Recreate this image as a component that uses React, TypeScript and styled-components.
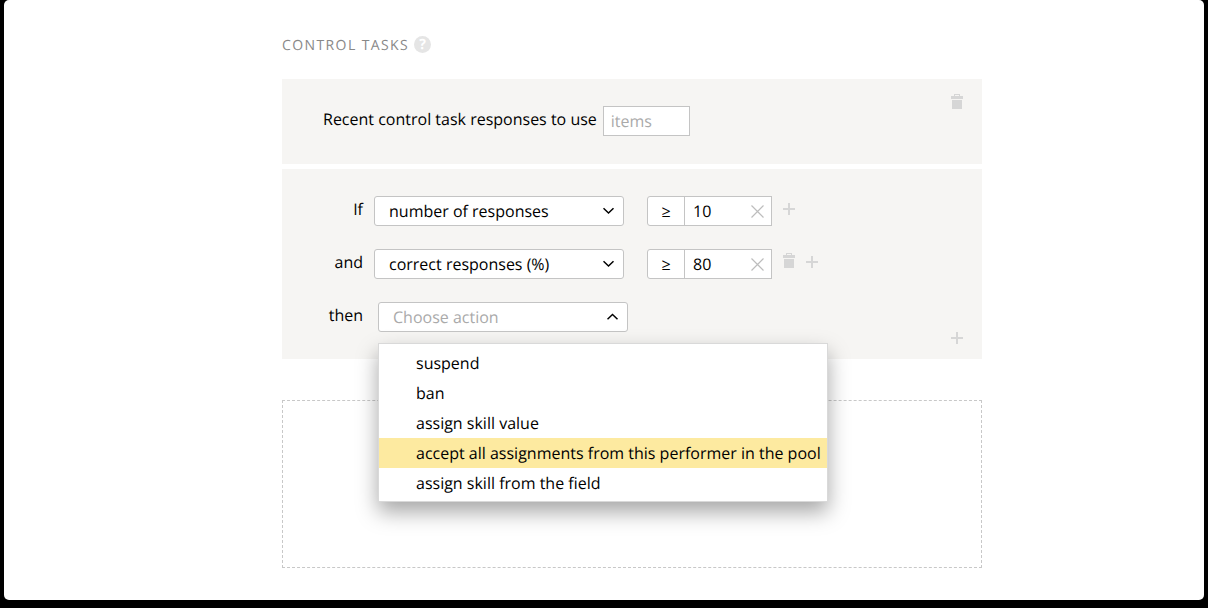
import React, { useState } from "react";
import styled, { createGlobalStyle } from "styled-components";

const GlobalStyle = createGlobalStyle`
  * {
    box-sizing: border-box;
  }
  body {
    margin: 0;
    background: #000;
    color: #000;
    font: 16px/20px "Open Sans", "Noto Sans", sans-serif;
    text-rendering: geometricPrecision;
  }
  button, input, select {
    margin: 0;
    font: inherit;
    color: inherit;
    text-rendering: inherit;
  }
`;

const Page = styled.main`
  min-height: calc(100vh - 8px);
  margin: 0 4px 8px;
  padding: 36px 16px 32px 278px;
  border-radius: 5px;
  background: #fff;
`;

const Column = styled.div`
  max-width: 700px;
`;

const Header = styled.header`
  display: flex;
  align-items: flex-start;
  gap: 5px;
  margin-bottom: 23px;
`;

const Title = styled.h2`
  margin: 0;
  font-size: 14px;
  line-height: 20px;
  font-weight: 400;
  letter-spacing: 0.1em;
  text-transform: uppercase;
  color: #888;
`;

const Help = styled.button`
  width: 17px;
  height: 17px;
  padding: 0;
  border: 0;
  border-radius: 50%;
  background: #e5e5e5;
  color: #fff;
  font-size: 14px;
  line-height: 17px;
  font-weight: 700;
`;

const Panel = styled.section`
  display: flex;
  justify-content: space-between;
  background: #f6f5f3;
  padding: 27px 19px 28px 41px;
  margin-bottom: 5px;
`;

const RulePanel = styled(Panel)`
  padding-left: 0;
  padding-bottom: 27px;
  margin-bottom: 41px;
`;

const Field = styled.div`
  display: flex;
  gap: 6px;
`;

const Label = styled.label`
  line-height: 26px;
`;

const ItemsInput = styled.input`
  width: 87px;
  height: 30px;
  padding: 0 7px;
  border: 1px solid #c4c4c4;
  background: #fff;
  outline: 0;
  &::placeholder {
    color: #aaa;
    opacity: 1;
  }
`;

const Rules = styled.div`
  display: flex;
  flex-direction: column;
  gap: 23px;
`;

const Rule = styled.div<{ $gap: number }>`
  display: flex;
  gap: ${(p) => p.$gap}px;
`;

const RuleLabel = styled(Label)`
  width: 81px;
  text-align: right;
`;

const SelectBox = styled.div`
  position: relative;
  width: 250px;
  height: 30px;
`;

const Select = styled.select<{ $empty?: boolean }>`
  appearance: none;
  display: block;
  width: 100%;
  height: 30px;
  padding: 0 32px 0 14px;
  border: 1px solid #c4c4c4;
  border-radius: 3px;
  background: #fff;
  color: ${(p) => (p.$empty ? "#aaa" : "#000")};
  outline: 0;
`;

const Chevron = styled.svg`
  position: absolute;
  right: 9px;
  top: 11px;
  pointer-events: none;
`;

const Condition = styled.div`
  display: flex;
  margin-left: 12px;
`;

const Operator = styled.select`
  appearance: none;
  width: 38px;
  height: 30px;
  padding: 0;
  border: 1px solid #c4c4c4;
  border-radius: 3px 0 0 3px;
  background: #fff;
  text-align: center;
  text-align-last: center;
  outline: 0;
`;

const ValueBox = styled.div`
  display: flex;
  align-items: center;
  width: 88px;
  height: 30px;
  margin-left: -1px;
  border: 1px solid #c4c4c4;
  background: #fff;
  padding: 0 7px 0 8px;
`;

const ValueInput = styled.input`
  flex: 1;
  min-width: 0;
  padding: 0;
  border: 0;
  background: none;
  outline: 0;
`;

const IconButton = styled.button`
  display: block;
  padding: 0;
  border: 0;
  background: none;
  line-height: 0;
  cursor: pointer;
`;

const Actions = styled.div`
  display: flex;
  align-items: center;
  gap: 11px;
  height: 26px;
`;

const CardDelete = styled(IconButton)`
  align-self: flex-start;
  margin-top: -12px;
`;

const CardAdd = styled(IconButton)`
  align-self: flex-end;
  margin-bottom: -12px;
`;

const Menu = styled.ul`
  position: absolute;
  z-index: 2;
  top: 41px;
  left: 0;
  margin: 0;
  padding: 4px 0 3px;
  list-style: none;
  border: 1px solid #d9d9d9;
  background: #fff;
  box-shadow: 0 10px 20px rgba(0, 0, 0, 0.35);
  white-space: nowrap;
`;

const Option = styled.li<{ $active: boolean }>`
  padding: 5px 6px 5px 37px;
  background: ${(p) => (p.$active ? "#fdeaa0" : "#fff")};
  cursor: pointer;
`;

const DropZone = styled.div`
  height: 168px;
  border: 1px dashed #c8c8c8;
`;

const TrashIcon = () => (
  <svg width="12" height="18" viewBox="0 0 12 18" fill="#d6d6d6" aria-hidden="true">
    <path d="M3 0h6v2h3v3H0V2h3zM4 1v1h4V1zM1 6h10v9H1z" fillRule="evenodd" />
  </svg>
);

const PlusIcon = () => (
  <svg width="12" height="12" viewBox="0 0 12 12" fill="none" stroke="#d6d6d6" strokeWidth="2" aria-hidden="true">
    <path d="M6 0v12M0 6h12" />
  </svg>
);

const ClearIcon = () => (
  <svg width="13" height="13" viewBox="0 0 13 13" fill="none" stroke="#bdbdbd" strokeWidth="1.2" aria-hidden="true">
    <path d="M0.5 0.5l12 12M12.5 0.5l-12 12" />
  </svg>
);

const Arrow = ({ up }: { up?: boolean }) => (
  <Chevron width="12" height="8" viewBox="0 0 12 8" fill="none" stroke="#000" strokeWidth="1.5" aria-hidden="true">
    <path d={up ? "M0.5 6.3L5.5 1.5l5 4.8" : "M0.5 1.2L5.5 6l5-4.8"} />
  </Chevron>
);

const metrics = ["number of responses", "correct responses (%)"];
const actions = [
  "suspend",
  "ban",
  "assign skill value",
  "accept all assignments from this performer in the pool",
  "assign skill from the field",
];

interface ConditionRowProps {
  id: string;
  label: string;
  metric: string;
  initial: string;
  removable?: boolean;
}

function ConditionRow({ id, label, metric, initial, removable }: ConditionRowProps) {
  const [value, setValue] = useState(initial);
  return (
    <Rule $gap={11}>
      <RuleLabel htmlFor={id}>{label}</RuleLabel>
      <SelectBox>
        <Select id={id} defaultValue={metric}>
          {metrics.map((m) => (
            <option key={m}>{m}</option>
          ))}
        </Select>
        <Arrow />
      </SelectBox>
      <Condition>
        <Operator aria-label="Comparison" defaultValue="≥">
          <option>≥</option>
          <option>≤</option>
          <option>=</option>
        </Operator>
        <ValueBox>
          <ValueInput aria-label="Value" value={value} onChange={(e) => setValue(e.target.value)} />
          <IconButton type="button" aria-label="Clear" onClick={() => setValue("")}>
            <ClearIcon />
          </IconButton>
        </ValueBox>
      </Condition>
      <Actions>
        {removable && (
          <IconButton type="button" aria-label="Remove condition">
            <TrashIcon />
          </IconButton>
        )}
        <IconButton type="button" aria-label="Add condition">
          <PlusIcon />
        </IconButton>
      </Actions>
    </Rule>
  );
}

function ActionRow() {
  const [open, setOpen] = useState(true);
  const [active, setActive] = useState(3);
  const [action, setAction] = useState("");
  return (
    <Rule $gap={15}>
      <RuleLabel htmlFor="action">then</RuleLabel>
      <SelectBox>
        <Select
          id="action"
          $empty={!action}
          value={action}
          onChange={(e) => setAction(e.target.value)}
          onMouseDown={(e) => {
            e.preventDefault();
            setOpen(!open);
          }}
        >
          <option value="">Choose action</option>
          {actions.map((a) => (
            <option key={a}>{a}</option>
          ))}
        </Select>
        <Arrow up={open} />
        {open && (
          <Menu role="listbox" aria-label="Action">
            {actions.map((a, i) => (
              <Option
                key={a}
                role="option"
                aria-selected={a === action}
                $active={i === active}
                onMouseEnter={() => setActive(i)}
                onClick={() => {
                  setAction(a);
                  setOpen(false);
                }}
              >
                {a}
              </Option>
            ))}
          </Menu>
        )}
      </SelectBox>
    </Rule>
  );
}

export default function App() {
  return (
    <>
      <GlobalStyle />
      <Page>
        <Column>
          <Header>
            <Title>Control tasks</Title>
            <Help type="button" aria-label="Help">?</Help>
          </Header>
          <Panel>
            <Field>
              <Label htmlFor="recent">Recent control task responses to use</Label>
              <ItemsInput id="recent" placeholder="items" />
            </Field>
            <CardDelete type="button" aria-label="Delete rule">
              <TrashIcon />
            </CardDelete>
          </Panel>
          <RulePanel>
            <Rules>
              <ConditionRow id="first" label="If" metric={metrics[0]} initial="10" />
              <ConditionRow id="second" label="and" metric={metrics[1]} initial="80" removable />
              <ActionRow />
            </Rules>
            <CardAdd type="button" aria-label="Add action">
              <PlusIcon />
            </CardAdd>
          </RulePanel>
          <DropZone />
        </Column>
      </Page>
    </>
  );
}
